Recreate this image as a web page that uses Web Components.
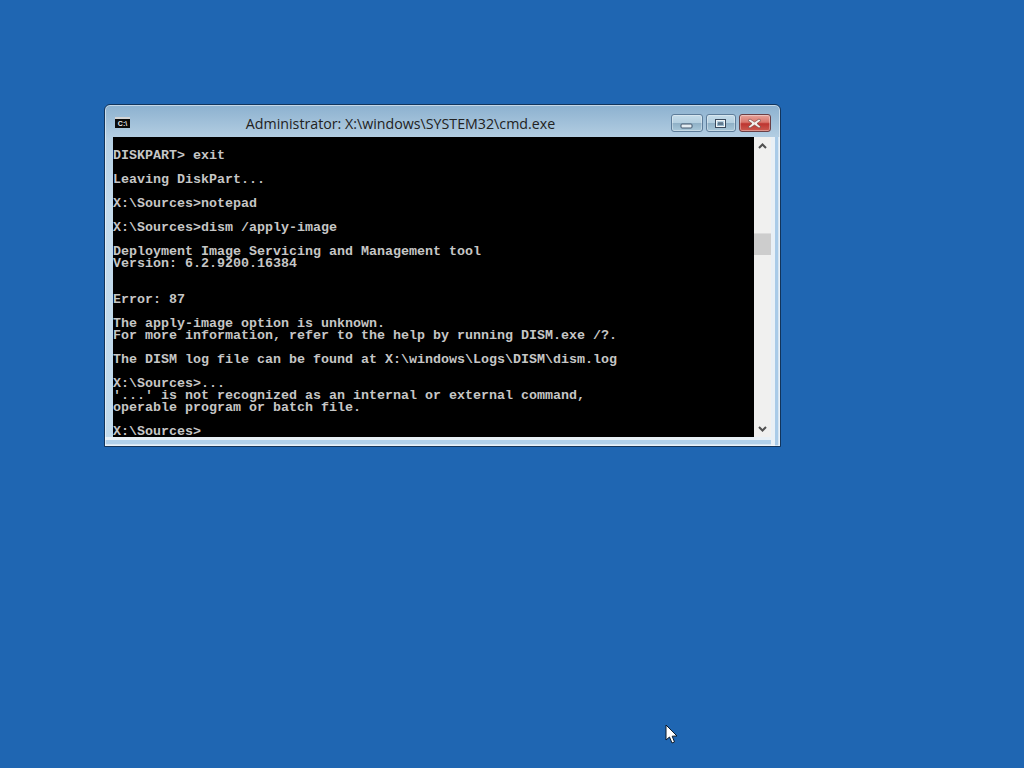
<!DOCTYPE html>
<html>
<head>
<meta charset="utf-8">
<title>cmd</title>
<style>
	html, body { margin: 0; height: 100%; background: #1f66b2; overflow: hidden; }
</style>
</head>
<body>
<win-desktop>
	<cmd-window caption="Administrator: X:\windows\SYSTEM32\cmd.exe">
		<console-text></console-text>
	</cmd-window>
	<mouse-cursor></mouse-cursor>
</win-desktop>
<script>
	const consoleLines = [
		'',
		'DISKPART> exit',
		'',
		'Leaving DiskPart...',
		'',
		'X:\\Sources>notepad',
		'',
		'X:\\Sources>dism /apply-image',
		'',
		'Deployment Image Servicing and Management tool',
		'Version: 6.2.9200.16384',
		'',
		'',
		'Error: 87',
		'',
		'The apply-image option is unknown.',
		'For more information, refer to the help by running DISM.exe /?.',
		'',
		'The DISM log file can be found at X:\\windows\\Logs\\DISM\\dism.log',
		'',
		'X:\\Sources>...',
		'\'...\' is not recognized as an internal or external command,',
		'operable program or batch file.',
		'',
		'X:\\Sources>',
	];

	customElements.define('win-desktop', class extends HTMLElement {
		constructor() {
			super();
			this.attachShadow({ mode: 'open' }).innerHTML = `
				<style>
					:host {
						display: block;
						position: relative;
						width: 1024px;
						height: 768px;
						box-sizing: border-box;
						padding: 104px 0 0 104px;
						background: #1f66b2;
					}
				</style>
				<slot></slot>`;
		}
	});

	customElements.define('caption-button', class extends HTMLElement {
		constructor() {
			super();
			const kind = this.getAttribute('kind');
			const glyphs = {
				min: '<rect x="1" y="6" width="11" height="4" rx="1" fill="#e4edf3" stroke="#42566c"/>',
				max: '<rect x="1.5" y="1.5" width="10" height="8" fill="none" stroke="#39495c"/><rect x="2.5" y="2.5" width="8" height="6" fill="none" stroke="#f0f5f8"/><rect x="4" y="4" width="5" height="3" fill="#39495c" opacity=".55"/>',
				close: '<path d="M2 1 L6.5 4 L11 1 L13 2.5 L9 5.5 L13 9 L11 10 L6.5 7 L2 10 L0 9 L4 5.5 L0 2.5 Z" fill="#f3f0ec" stroke="#6d3a36" stroke-width=".6"/>',
			};
			this.attachShadow({ mode: 'open' }).innerHTML = `
				<style>
					:host {
						display: flex;
						align-items: center;
						justify-content: center;
						box-sizing: border-box;
						height: 18px;
						width: 30px;
						border: 1px solid #5e7d9a;
						border-radius: 3px;
						background: linear-gradient(#c5dcea 0%, #b4cfe0 48%, #8fb0c6 52%, #a9c8da 100%);
						box-shadow: inset 0 0 0 1px rgba(255,255,255,.35);
					}
					:host([kind=min]) { width: 32px; }
					:host([kind=close]) {
						width: 32px;
						border-color: #6a3f45;
						background: linear-gradient(#e6a49b 0%, #d9766c 45%, #bd3530 55%, #cc5b50 100%);
					}
					svg { display: block; }
				</style>
				<svg width="14" height="11" viewBox="0 0 14 11">${glyphs[kind]}</svg>`;
		}
	});

	customElements.define('win-scrollbar', class extends HTMLElement {
		constructor() {
			super();
			this.attachShadow({ mode: 'open' }).innerHTML = `
				<style>
					:host {
						display: flex;
						flex-direction: column;
						width: 17px;
						background: #f0f0ef;
					}
					.arrow { height: 17px; display: flex; align-items: center; justify-content: center; }
					.track { flex: 1; padding-top: 79px; }
					.thumb { height: 22px; background: #cdcdcd; border-top: 1px solid #dcdcdc; box-sizing: border-box; }
					svg { display: block; }
				</style>
				<div class="arrow"><svg width="9" height="6" viewBox="0 0 9 6"><path d="M1 5 L4.5 1.5 L8 5" fill="none" stroke="#505050" stroke-width="2"/></svg></div>
				<div class="track"><div class="thumb"></div></div>
				<div class="arrow"><svg width="9" height="6" viewBox="0 0 9 6"><path d="M1 1 L4.5 4.5 L8 1" fill="none" stroke="#505050" stroke-width="2"/></svg></div>`;
		}
	});

	customElements.define('console-text', class extends HTMLElement {
		constructor() {
			super();
			const pre = consoleLines.map(l => `<div class="line">${l.replace(/&/g, '&amp;').replace(/</g, '&lt;') || '&nbsp;'}</div>`).join('');
			this.attachShadow({ mode: 'open' }).innerHTML = `
				<style>
					:host {
						display: block;
						flex: 1;
						box-sizing: border-box;
						height: 300px;
						padding-top: 1px;
						background: #000;
						color: #c6c6c6;
						font: bold 13.33px/12px "Liberation Mono", monospace;
					}
					.line { height: 12px; white-space: pre; }
				</style>
				${pre}`;
		}
	});

	customElements.define('cmd-window', class extends HTMLElement {
		constructor() {
			super();
			const caption = this.getAttribute('caption');
			this.attachShadow({ mode: 'open' }).innerHTML = `
				<style>
					:host {
						display: block;
						box-sizing: border-box;
						width: 677px;
						height: 343px;
						border: 1px solid #12355c;
						border-radius: 6px 6px 0 0;
						background:
							linear-gradient(to left, #d5e5f2 2px, #a9cbe8 2px, #a9cbe8 5px, #e8f0f6 5px) right bottom / 9px calc(100% - 32px) no-repeat,
							linear-gradient(to top, #d5e5f2 2px, #b0d0ea 2px, #b0d0ea 6px, #e8f0f6 6px) left bottom / 100% 9px no-repeat,
							linear-gradient(#8cb1cf 0, #b5cfe3 10%, #c4dbec 30%, #c0d9eb 100%);
						box-shadow: inset 0 0 0 1px rgba(255,255,255,.5);
					}
					.title {
						height: 32px;
						display: flex;
						align-items: flex-start;
						padding: 0 9px 0 10px;
						box-sizing: border-box;
					}
					.icon {
						width: 15px; height: 11px;
						margin-top: 12px;
						box-sizing: border-box;
						background: #0a0a0a;
						border-top: 2px solid #d5d5d5;
						color: #e8e8e8;
						font: bold 7px/9px "Liberation Sans", sans-serif;
						overflow: hidden;
						text-align: center;
					}
					.text {
						flex: 1;
						margin-top: 9px;
						text-align: center;
						font: 14.23px "Open Sans", "Liberation Sans", sans-serif;
						color: #222;
					}
					.buttons { display: flex; gap: 3px; margin-top: 9px; }
					.client {
						display: flex;
						margin: 0 9px 0 8px;
					}
				</style>
				<div class="title">
					<div class="icon">C:\\</div>
					<div class="text">${caption}</div>
					<div class="buttons">
						<caption-button kind="min"></caption-button>
						<caption-button kind="max"></caption-button>
						<caption-button kind="close"></caption-button>
					</div>
				</div>
				<div class="client">
					<slot></slot>
					<win-scrollbar></win-scrollbar>
				</div>`;
		}
	});

	customElements.define('mouse-cursor', class extends HTMLElement {
		constructor() {
			super();
			this.attachShadow({ mode: 'open' }).innerHTML = `
				<style>
					:host { position: absolute; left: 665px; top: 724px; display: block; }
					svg { display: block; }
				</style>
				<svg width="14" height="21" viewBox="0 0 14 21"><path d="M1 1 L1 16 L4.5 13 L7 19 L9.5 18 L7.2 12.2 L12 12 Z" fill="#fff" stroke="#0c1a2a" stroke-width="1"/></svg>`;
		}
	});
</script>
</body>
</html>
